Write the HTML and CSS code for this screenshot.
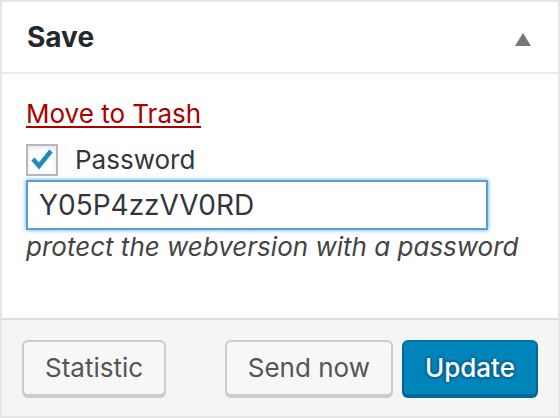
FILE: index.html
```html
<!DOCTYPE html>
<html lang="en">
<head>
<meta charset="utf-8">
<title>Save</title>
<link rel="stylesheet" href="styles.css">
</head>
<body>
<div class="postbox">
  <div class="postbox-header">
    <h2 class="postbox-title">Save</h2>
    <svg class="toggle-indicator" width="16" height="13" viewBox="0 0 16 13" aria-hidden="true"><polygon points="8,0 16,13 0,13" fill="#72777c"/></svg>
  </div>
  <div class="postbox-body">
    <a class="trash-link" href="#">Move to Trash</a>
    <label class="check-row">
      <span class="checkbox">
        <svg width="28" height="28" viewBox="0 0 28 28" aria-hidden="true"><polyline points="5,13 11,20 23,5" fill="none" stroke="#1e8cbe" stroke-width="4.5" stroke-linejoin="miter"/></svg>
      </span>
      <span class="check-label">Password</span>
    </label>
    <div class="text-input">Y05P4zzVV0RD</div>
    <p class="description">protect the webversion with a password</p>
  </div>
  <div class="postbox-footer">
    <button class="button">Statistic</button>
    <div class="footer-actions">
      <button class="button">Send now</button>
      <button class="button button-primary">Update</button>
    </div>
  </div>
</div>
</body>
</html>
```

FILE: styles.css
```css
* { box-sizing: border-box; }
html, body { margin: 0; padding: 0; background: #fff; }
body { font-family: Inter, "Liberation Sans", sans-serif; }

.postbox {
  width: 560px;
  height: 418px;
  border: 2px solid #e5e5e5;
  background: #fff;
  display: flex;
  flex-direction: column;
}

.postbox-header {
  height: 72px;
  border-bottom: 2px solid #eee;
  display: flex;
  align-items: center;
  justify-content: space-between;
  padding: 0 27px 0 25px;
}
.postbox-title {
  margin: 0;
  font-size: 28px;
  font-weight: 700;
  line-height: 36px;
  color: #23282d;
}
.toggle-indicator { margin-top: 5px; display: block; }

.postbox-body {
  flex: 1;
  padding: 22px 24px 0 24px;
  display: flex;
  flex-direction: column;
  align-items: flex-start;
}
.trash-link {
  font-size: 26px;
  line-height: 36px;
  color: #a00;
  text-decoration: underline;
  text-decoration-thickness: 2px;
  text-underline-offset: 3px;
}
.check-row {
  margin-top: 12px;
  display: flex;
  align-items: center;
  height: 32px;
}
.checkbox {
  width: 32px;
  height: 32px;
  border: 2px solid #b4b9be;
  box-shadow: inset 0 2px 4px rgba(0,0,0,0.1);
  display: flex;
  align-items: center;
  justify-content: center;
  background: #fff;
}
.checkbox svg { display: block; }
.check-label {
  margin-left: 17px;
  font-size: 26px;
  line-height: 32px;
  color: #32373c;
}
.text-input {
  margin-top: 4px;
  width: 462px;
  height: 50px;
  border: 2px solid #5b9dd9;
  box-shadow: 0 0 4px rgba(30,140,190,0.8);
  padding: 0 11px;
  display: flex;
  align-items: center;
  font-size: 28px;
  color: #32373c;
}
.description {
  margin: 2px 0 0 0;
  font-size: 26px;
  line-height: 30px;
  font-style: italic;
  color: #444;
}

.postbox-footer {
  border-top: 2px solid #ddd;
  background: #f5f5f5;
  height: 98px;
  padding: 20px 20px 0 20px;
  display: flex;
  justify-content: space-between;
  align-items: flex-start;
}
.footer-actions { display: flex; gap: 9px; }
.button {
  height: 56px;
  padding: 0 21px;
  border: 2px solid #ccc;
  border-radius: 6px;
  background: #f7f7f7;
  box-shadow: 0 2px 0 #ccc;
  font-family: Inter, "Liberation Sans", sans-serif;
  font-size: 26px;
  color: #555;
  line-height: 52px;
}
.button-primary {
  background: #0085ba;
  border-color: #0073aa #006799 #006799;
  box-shadow: 0 2px 0 #006799;
  color: #fff;
  font-weight: 500;
  text-shadow: 0 -2px 2px #006799, 2px 0 2px #006799, 0 2px 2px #006799, -2px 0 2px #006799;
}
```
